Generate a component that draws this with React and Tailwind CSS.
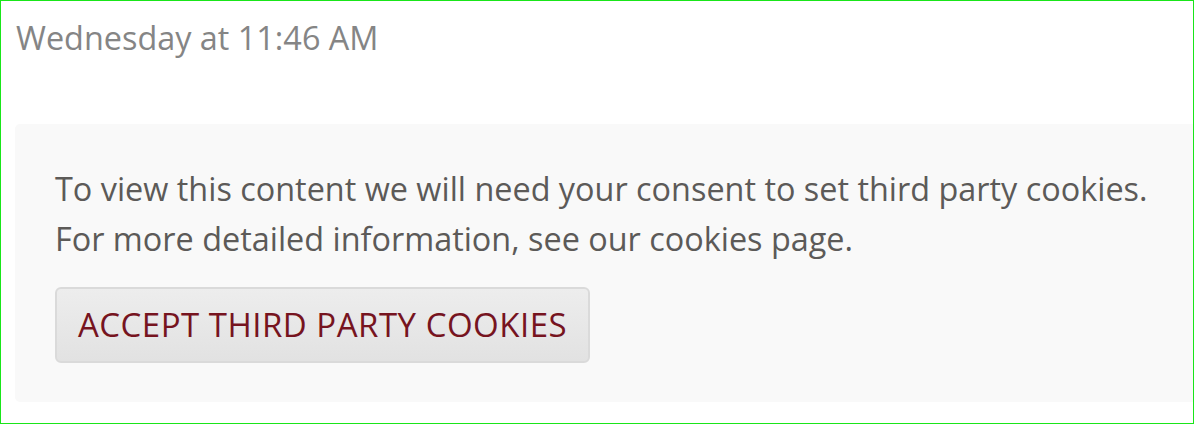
import React from 'react';

export default function App() {
  return (
    <div className="h-[424px] w-[1194px] overflow-hidden border border-[#19e619] bg-white font-['Open_Sans',sans-serif]">
      <div className="pl-[15px] pt-[14px]">
        <p className="text-[32.4px] leading-[44px] text-[#858585]">Wednesday at 11:46 AM</p>
      </div>
      <div className="ml-[14px] mr-[-20px] mt-[65px] rounded-[5px] bg-[#f9f9f9] px-[40px] pt-[39px] pb-[39px]">
        <p className="text-[32.4px] leading-[50px] text-[#5c5a58]">
          To view this content we will need your consent to set third party cookies.
          <br />
          For more detailed information, see our cookies page.
        </p>
        <button
          type="button"
          className="mt-[24px] h-[76px] w-[535px] rounded-[6px] border-2 border-[#dadada] bg-gradient-to-b from-[#ededed] to-[#e2e2e2] text-[33px] tracking-[0.5px] text-[#76141f]"
        >
          ACCEPT THIRD PARTY COOKIES
        </button>
      </div>
    </div>
  );
}
